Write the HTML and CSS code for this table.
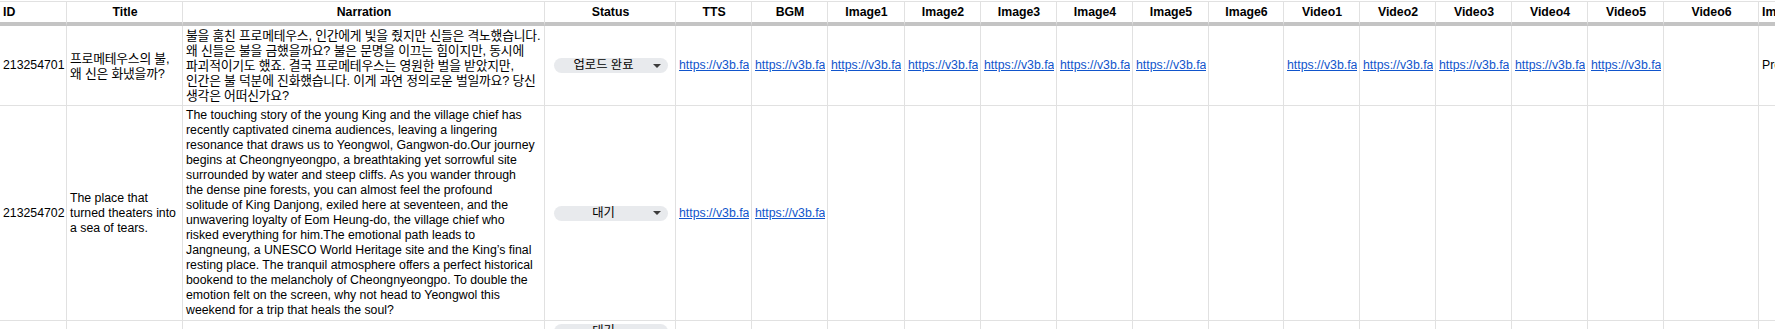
FILE: index.html
```html
<!DOCTYPE html>
<html lang="ko">
<head>
<meta charset="utf-8">
<title>Sheet</title>
<link rel="stylesheet" href="styles.css">
</head>
<body>
<div class="sheet">
  <div class="row head">
    <div class="cell left">ID</div>
    <div class="cell">Title</div>
    <div class="cell">Narration</div>
    <div class="cell">Status</div>
    <div class="cell">TTS</div>
    <div class="cell">BGM</div>
    <div class="cell">Image1</div>
    <div class="cell">Image2</div>
    <div class="cell">Image3</div>
    <div class="cell">Image4</div>
    <div class="cell">Image5</div>
    <div class="cell">Image6</div>
    <div class="cell">Video1</div>
    <div class="cell">Video2</div>
    <div class="cell">Video3</div>
    <div class="cell">Video4</div>
    <div class="cell">Video5</div>
    <div class="cell">Video6</div>
    <div class="cell left">ImagePrompt</div>
  </div>

  <div class="row r1">
    <div class="cell num">213254701</div>
    <div class="cell text ko">프로메테우스의 불,<br>왜 신은 화냈을까?</div>
    <div class="cell text ko">불을 훔친 프로메테우스, 인간에게 빛을 줬지만 신들은 격노했습니다.<br>왜 신들은 불을 금했을까요? 불은 문명을 이끄는 힘이지만, 동시에<br>파괴적이기도 했죠. 결국 프로메테우스는 영원한 벌을 받았지만,<br>인간은 불 덕분에 진화했습니다. 이게 과연 정의로운 벌일까요? 당신<br>생각은 어떠신가요?</div>
    <div class="cell status"><span class="chip"><span class="chip-text">업로드 완료</span><span class="caret"></span></span></div>
    <div class="cell url"><a class="link" href="#">https://v3b.fa</a></div>
    <div class="cell url"><a class="link" href="#">https://v3b.fa</a></div>
    <div class="cell url"><a class="link" href="#">https://v3b.fa</a></div>
    <div class="cell url"><a class="link" href="#">https://v3b.fa</a></div>
    <div class="cell url"><a class="link" href="#">https://v3b.fa</a></div>
    <div class="cell url"><a class="link" href="#">https://v3b.fa</a></div>
    <div class="cell url"><a class="link" href="#">https://v3b.fa</a></div>
    <div class="cell"></div>
    <div class="cell url"><a class="link" href="#">https://v3b.fa</a></div>
    <div class="cell url"><a class="link" href="#">https://v3b.fa</a></div>
    <div class="cell url"><a class="link" href="#">https://v3b.fa</a></div>
    <div class="cell url"><a class="link" href="#">https://v3b.fa</a></div>
    <div class="cell url"><a class="link" href="#">https://v3b.fa</a></div>
    <div class="cell"></div>
    <div class="cell"><span class="clip">Prometheus stealing fire</span></div>
  </div>

  <div class="row r2">
    <div class="cell num">213254702</div>
    <div class="cell text">The place that<br>turned theaters into<br>a sea of tears.</div>
    <div class="cell text">The touching story of the young King and the village chief has<br>recently captivated cinema audiences, leaving a lingering<br>resonance that draws us to Yeongwol, Gangwon-do.Our journey<br>begins at Cheongnyeongpo, a breathtaking yet sorrowful site<br>surrounded by water and steep cliffs. As you wander through<br>the dense pine forests, you can almost feel the profound<br>solitude of King Danjong, exiled here at seventeen, and the<br>unwavering loyalty of Eom Heung-do, the village chief who<br>risked everything for him.The emotional path leads to<br>Jangneung, a UNESCO World Heritage site and the King’s final<br>resting place. The tranquil atmosphere offers a perfect historical<br>bookend to the melancholy of Cheongnyeongpo. To double the<br>emotion felt on the screen, why not head to Yeongwol this<br>weekend for a trip that heals the soul?</div>
    <div class="cell status"><span class="chip"><span class="chip-text">대기</span><span class="caret"></span></span></div>
    <div class="cell url"><a class="link" href="#">https://v3b.fa</a></div>
    <div class="cell url"><a class="link" href="#">https://v3b.fa</a></div>
    <div class="cell"></div>
    <div class="cell"></div>
    <div class="cell"></div>
    <div class="cell"></div>
    <div class="cell"></div>
    <div class="cell"></div>
    <div class="cell"></div>
    <div class="cell"></div>
    <div class="cell"></div>
    <div class="cell"></div>
    <div class="cell"></div>
    <div class="cell"></div>
    <div class="cell"></div>
  </div>

  <div class="row r3">
    <div class="cell"></div>
    <div class="cell"></div>
    <div class="cell"></div>
    <div class="cell status"><span class="chip"><span class="chip-text">대기</span><span class="caret"></span></span></div>
    <div class="cell"></div>
    <div class="cell"></div>
    <div class="cell"></div>
    <div class="cell"></div>
    <div class="cell"></div>
    <div class="cell"></div>
    <div class="cell"></div>
    <div class="cell"></div>
    <div class="cell"></div>
    <div class="cell"></div>
    <div class="cell"></div>
    <div class="cell"></div>
    <div class="cell"></div>
    <div class="cell"></div>
    <div class="cell"></div>
  </div>
</div>
</body>
</html>
```

FILE: styles.css
```css
html, body {
  margin: 0;
  padding: 0;
  background: #ffffff;
  overflow: hidden;
}

body {
  font-family: "Liberation Sans", Arial, "Noto Sans CJK KR", sans-serif;
  font-size: 12.3px;
  color: #000000;
}

.sheet {
  width: 1960px;
  padding-top: 1px;
}

.row {
  display: grid;
  grid-template-columns: 67px 116px 362px 131px 76px 76px 77px 76px 76px 76px 76px 75px 76px 76px 76px 76px 76px 95px 200px;
}

.cell {
  box-sizing: border-box;
  border-right: 1px solid #e1e1e1;
  border-bottom: 1px solid #e1e1e1;
  padding: 0 2px 0 3px;
  display: flex;
  align-items: center;
  line-height: 15px;
  min-width: 0;
  overflow: hidden;
}

.head .cell {
  border-top: 1px solid #e1e1e1;
  border-bottom: 4px solid #c4c4c4;
  height: 25px;
  justify-content: center;
  font-weight: bold;
  padding-top: 1px;
}

.head .cell.left {
  justify-content: flex-start;
}

.r1 .cell {
  height: 80px;
}

.r2 .cell {
  height: 215px;
}

.r3 .cell {
  height: 40px;
  align-items: flex-start;
}

.num {
  justify-content: flex-start;
}

.text {
  display: flex;
  align-items: center;
  white-space: nowrap;
}

.ko {
  font-size: 12.8px;
  letter-spacing: -0.2px;
}

.status {
  padding: 0 7px 0 9px;
}

.r3 .status {
  padding-top: 3px;
}

.chip {
  display: flex;
  align-items: center;
  width: 100%;
  height: 15px;
  border-radius: 8px;
  background: #e8eaed;
  font-size: 12.3px;
  line-height: 15px;
}

.chip-text {
  flex: 1;
  text-align: center;
  padding-left: 0;
}

.caret {
  width: 0;
  height: 0;
  border-left: 4px solid transparent;
  border-right: 4px solid transparent;
  border-top: 4px solid #3c3c3c;
  margin-right: 7px;
}

.url {
  padding: 0 1px 0 3px;
}

.link {
  display: block;
  color: #1155cc;
  text-decoration: underline;
  white-space: nowrap;
  overflow: hidden;
  min-width: 0;
}

.clip {
  white-space: nowrap;
}
```
